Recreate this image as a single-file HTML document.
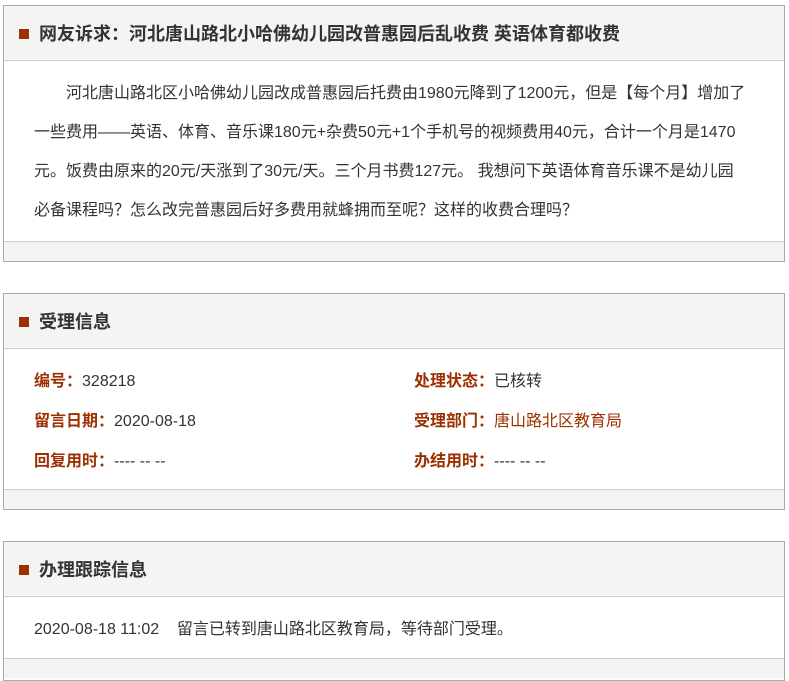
<!DOCTYPE html>
<html><head><meta charset="utf-8"><style>
*{margin:0;padding:0;box-sizing:border-box}
body{width:789px;height:663px;background:#fff;font-family:"Liberation Sans","Noto Sans CJK SC",sans-serif;color:#333;overflow:hidden;position:relative}
.p{position:absolute;left:3px;width:782px;border:1px solid #aaa;border-bottom:1px solid #aaa}
.h{height:55px;background:#f4f4f4;border-bottom:1px solid #ccc;font-size:18px;font-weight:bold;color:#333;line-height:56px;padding-left:35px;position:relative}
.h:before{content:"";position:absolute;left:15px;top:23px;width:10px;height:10px;background:#9c3000}
.f{height:20px;background:#f4f4f4;border-top:1px solid #ccc}
.b{font-size:16px;padding:0 30px}
.t{text-indent:32px;line-height:39px;padding-top:13px;padding-bottom:11px;padding-right:0;white-space:nowrap}
.r{display:flex;line-height:40px}
.r div{width:300px;flex-shrink:0}
.r div:first-child{width:380px}
.l{color:#9c3000;font-weight:bold}
</style></head><body>
<div class="p" style="top:5px">
<div class="h">网友诉求：河北唐山路北小哈佛幼儿园改普惠园后乱收费 英语体育都收费</div>
<div class="b t">河北唐山路北区小哈佛幼儿园改成普惠园后托费由1980元降到了1200元，但是【每个月】增加了<br>一些费用——英语、体育、音乐课180元+杂费50元+1个手机号的视频费用40元，合计一个月是1470<br>元。饭费由原来的20元/天涨到了30元/天。三个月书费127元。 我想问下英语体育音乐课不是幼儿园<br>必备课程吗？怎么改完普惠园后好多费用就蜂拥而至呢？这样的收费合理吗？</div>
<div class="f"></div>
</div>
<div class="p" style="top:293px">
<div class="h">受理信息</div>
<div class="b" style="padding-top:13px;padding-bottom:7px">
<div class="r"><div><span class="l">编号：</span>328218</div><div><span class="l">处理状态：</span>已核转</div></div>
<div class="r"><div><span class="l">留言日期：</span>2020-08-18</div><div><span class="l">受理部门：</span><span style="color:#9c3000">唐山路北区教育局</span></div></div>
<div class="r"><div><span class="l">回复用时：</span>---- -- --</div><div><span class="l">办结用时：</span>---- -- --</div></div>
</div>
<div class="f"></div>
</div>
<div class="p" style="top:541px;height:140px">
<div class="h">办理跟踪信息</div>
<div class="b" style="padding-top:13px;padding-bottom:8px;line-height:40px">2020-08-18 11:02&nbsp;&nbsp;&nbsp;&nbsp;留言已转到唐山路北区教育局，等待部门受理。</div>
<div class="f"></div>
</div>
</body></html>
